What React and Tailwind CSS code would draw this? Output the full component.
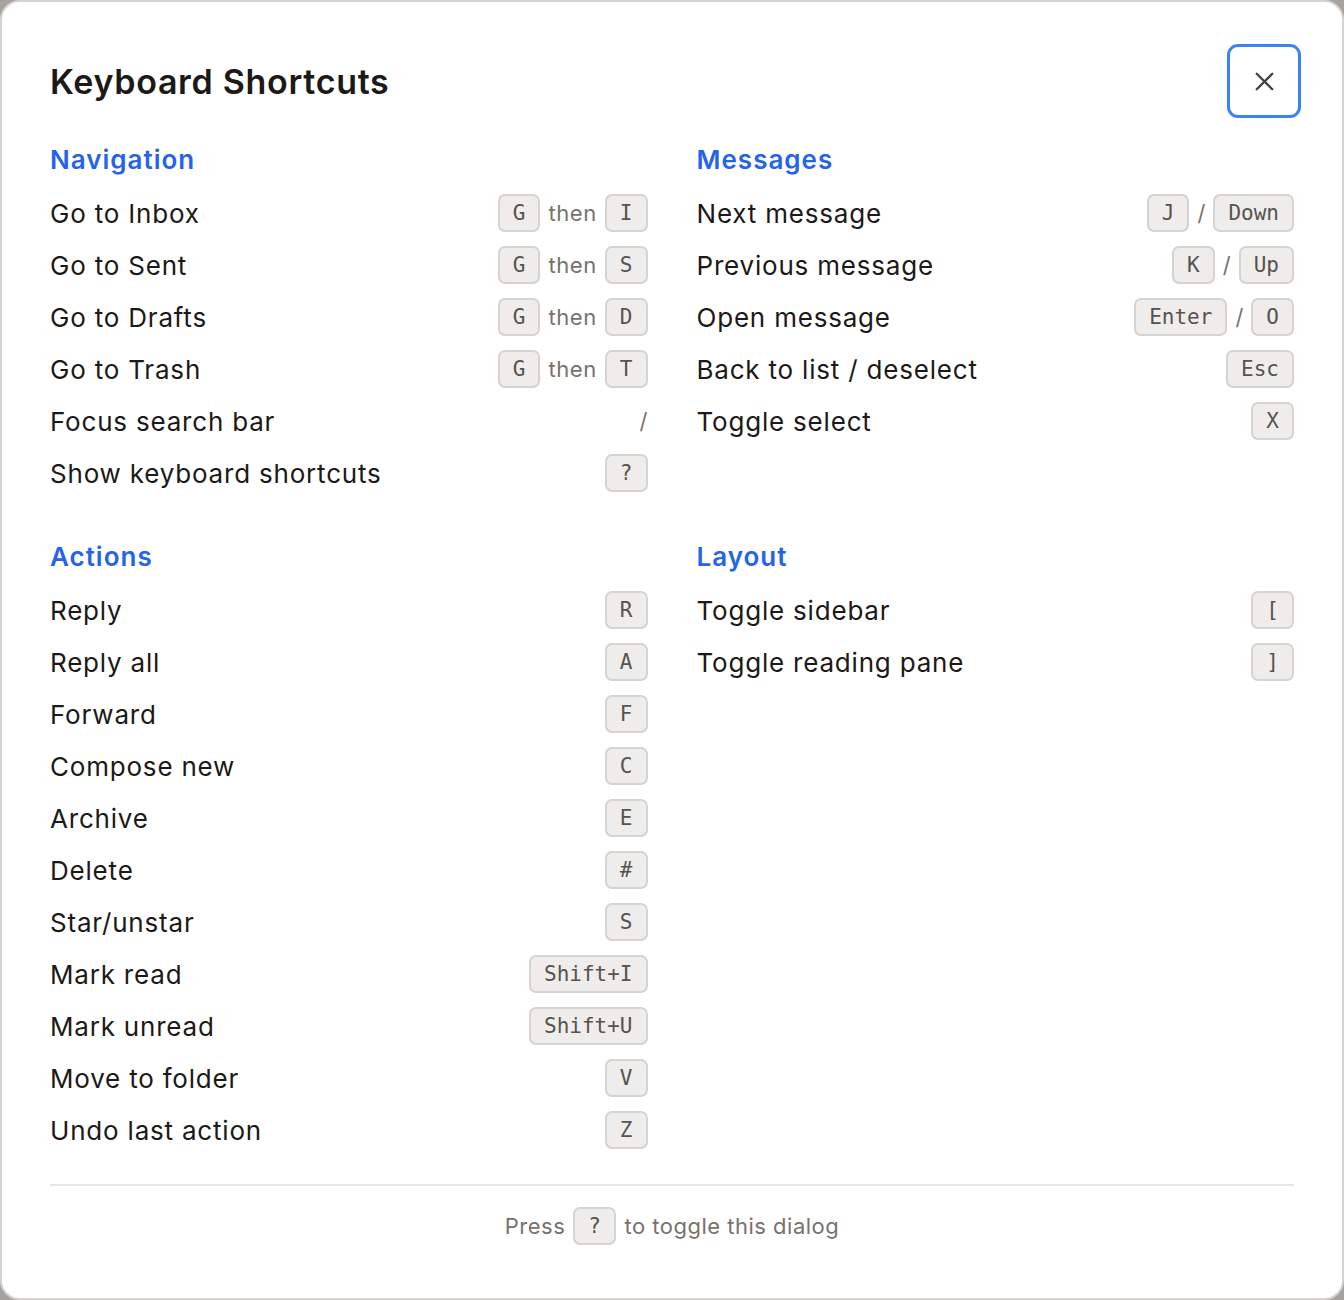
import { X } from "lucide-react";

const sections = [
  {
    title: "Navigation",
    items: [
      { label: "Go to Inbox", keys: ["G", "then", "I"] },
      { label: "Go to Sent", keys: ["G", "then", "S"] },
      { label: "Go to Drafts", keys: ["G", "then", "D"] },
      { label: "Go to Trash", keys: ["G", "then", "T"] },
      { label: "Focus search bar", keys: ["/plain"] },
      { label: "Show keyboard shortcuts", keys: ["?"] },
    ],
  },
  {
    title: "Messages",
    items: [
      { label: "Next message", keys: ["J", "/", "Down"] },
      { label: "Previous message", keys: ["K", "/", "Up"] },
      { label: "Open message", keys: ["Enter", "/", "O"] },
      { label: "Back to list / deselect", keys: ["Esc"] },
      { label: "Toggle select", keys: ["X"] },
    ],
  },
  {
    title: "Actions",
    items: [
      { label: "Reply", keys: ["R"] },
      { label: "Reply all", keys: ["A"] },
      { label: "Forward", keys: ["F"] },
      { label: "Compose new", keys: ["C"] },
      { label: "Archive", keys: ["E"] },
      { label: "Delete", keys: ["#"] },
      { label: "Star/unstar", keys: ["S"] },
      { label: "Mark read", keys: ["Shift+I"] },
      { label: "Mark unread", keys: ["Shift+U"] },
      { label: "Move to folder", keys: ["V"] },
      { label: "Undo last action", keys: ["Z"] },
    ],
  },
  {
    title: "Layout",
    items: [
      { label: "Toggle sidebar", keys: ["["] },
      { label: "Toggle reading pane", keys: ["]"] },
    ],
  },
];

const Kbd = ({ children }) => (
  <kbd className="h-[38px] flex items-center px-[13px] rounded-[7px] border-2 border-[#d6d3d1] bg-[#eeedeb] text-[#57534e] text-[21px] font-['DejaVu_Sans_Mono',monospace] leading-none">
    {children}
  </kbd>
);

const Keys = ({ keys }) => (
  <div className="flex items-center gap-2">
    {keys.map((k, i) => {
      if (k === "then") return <span key={i} className="text-[22px] tracking-[0.6px] text-[#78716c]">then</span>;
      if (k === "/" || k === "/plain") return <span key={i} className="text-[22px] text-[#78716c]">/</span>;
      return <Kbd key={i}>{k}</Kbd>;
    })}
  </div>
);

const Section = ({ section }) => (
  <div>
    <h3 className="text-[26px] leading-[34px] font-semibold tracking-[1px] text-[#2563eb] mb-[10px]">{section.title}</h3>
    {section.items.map((item) => (
      <div key={item.label} className="h-[52px] flex items-center justify-between">
        <span className="text-[26px] tracking-[0.8px] text-[#1c1917]">{item.label}</span>
        <Keys keys={item.keys} />
      </div>
    ))}
  </div>
);

export default function App() {
  return (
    <div className="bg-[#a8a29e] font-['Inter',sans-serif]">
      <div className="h-[1300px] bg-white border-2 border-[#d6d3d1] rounded-[20px] px-[48px] pt-[42px] flex flex-col">
        {/* Header */}
        <div className="flex items-center justify-between h-[74px]">
          <h2 className="text-[34px] font-semibold text-[#1c1917] tracking-[0.7px]">Keyboard Shortcuts</h2>
          <button className="w-[74px] h-[74px] -mr-[7px] rounded-[11px] border-[3px] border-[#3b82f6] flex items-center justify-center text-[#44403c]">
            <X size={31} strokeWidth={1.8} />
          </button>
        </div>

        {/* Shortcut groups */}
        <div className="grid grid-cols-2 gap-x-[49px] gap-y-[41px] mt-[25px]">
          {sections.map((s) => (
            <Section key={s.title} section={s} />
          ))}
        </div>

        {/* Footer */}
        <div className="mt-[28px] border-t-2 border-[#e7e5e4] pt-[21px] flex items-center justify-center gap-2 text-[22px] tracking-[0.5px] text-[#78716c]">
          <span>Press</span>
          <Kbd>?</Kbd>
          <span>to toggle this dialog</span>
        </div>
      </div>
    </div>
  );
}
